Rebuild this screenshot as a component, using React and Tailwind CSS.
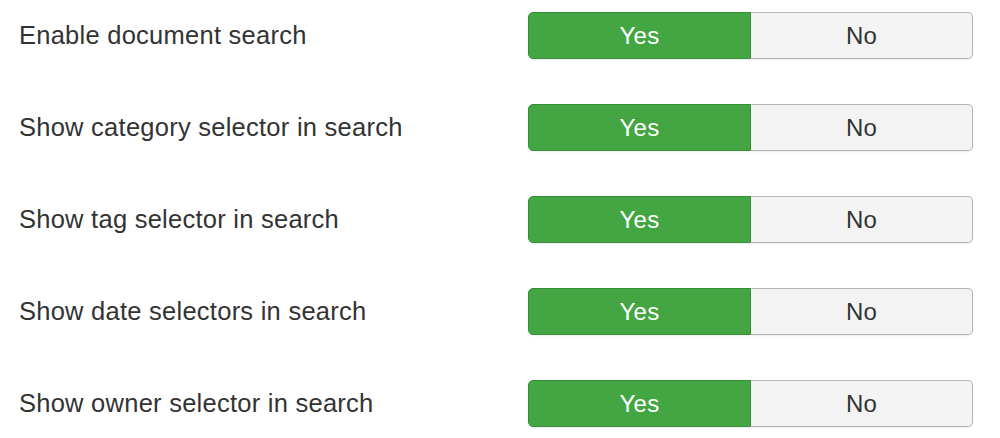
const rows = [
  'Enable document search',
  'Show category selector in search',
  'Show tag selector in search',
  'Show date selectors in search',
  'Show owner selector in search',
];

function Toggle() {
  return (
    <div className="flex w-[445px] h-[47px] rounded-[5px] shadow-[0_1px_2px_rgba(0,0,0,0.08)]">
      <button className="flex-1 flex items-center justify-center rounded-l-[5px] border border-[#388e38] bg-[#43a643] text-white text-[24px] tracking-[0.2px]">
        Yes
      </button>
      <button className="flex-1 flex items-center justify-center rounded-r-[5px] border border-l-0 border-[#b5b5b5] bg-[#f3f3f3] text-[#333] text-[24px] tracking-[0.2px]">
        No
      </button>
    </div>
  );
}

export default function App() {
  return (
    <div className="w-[1000px] h-[438px] bg-white pt-3 pl-[19px] font-['Liberation_Sans',Arial,sans-serif] flex flex-col gap-[45px]">
      {rows.map((label) => (
        <div key={label} className="flex items-center h-[47px]">
          <div className="w-[509px] text-[25.5px] tracking-[0.25px] text-[#333]">{label}</div>
          <Toggle />
        </div>
      ))}
    </div>
  );
}
